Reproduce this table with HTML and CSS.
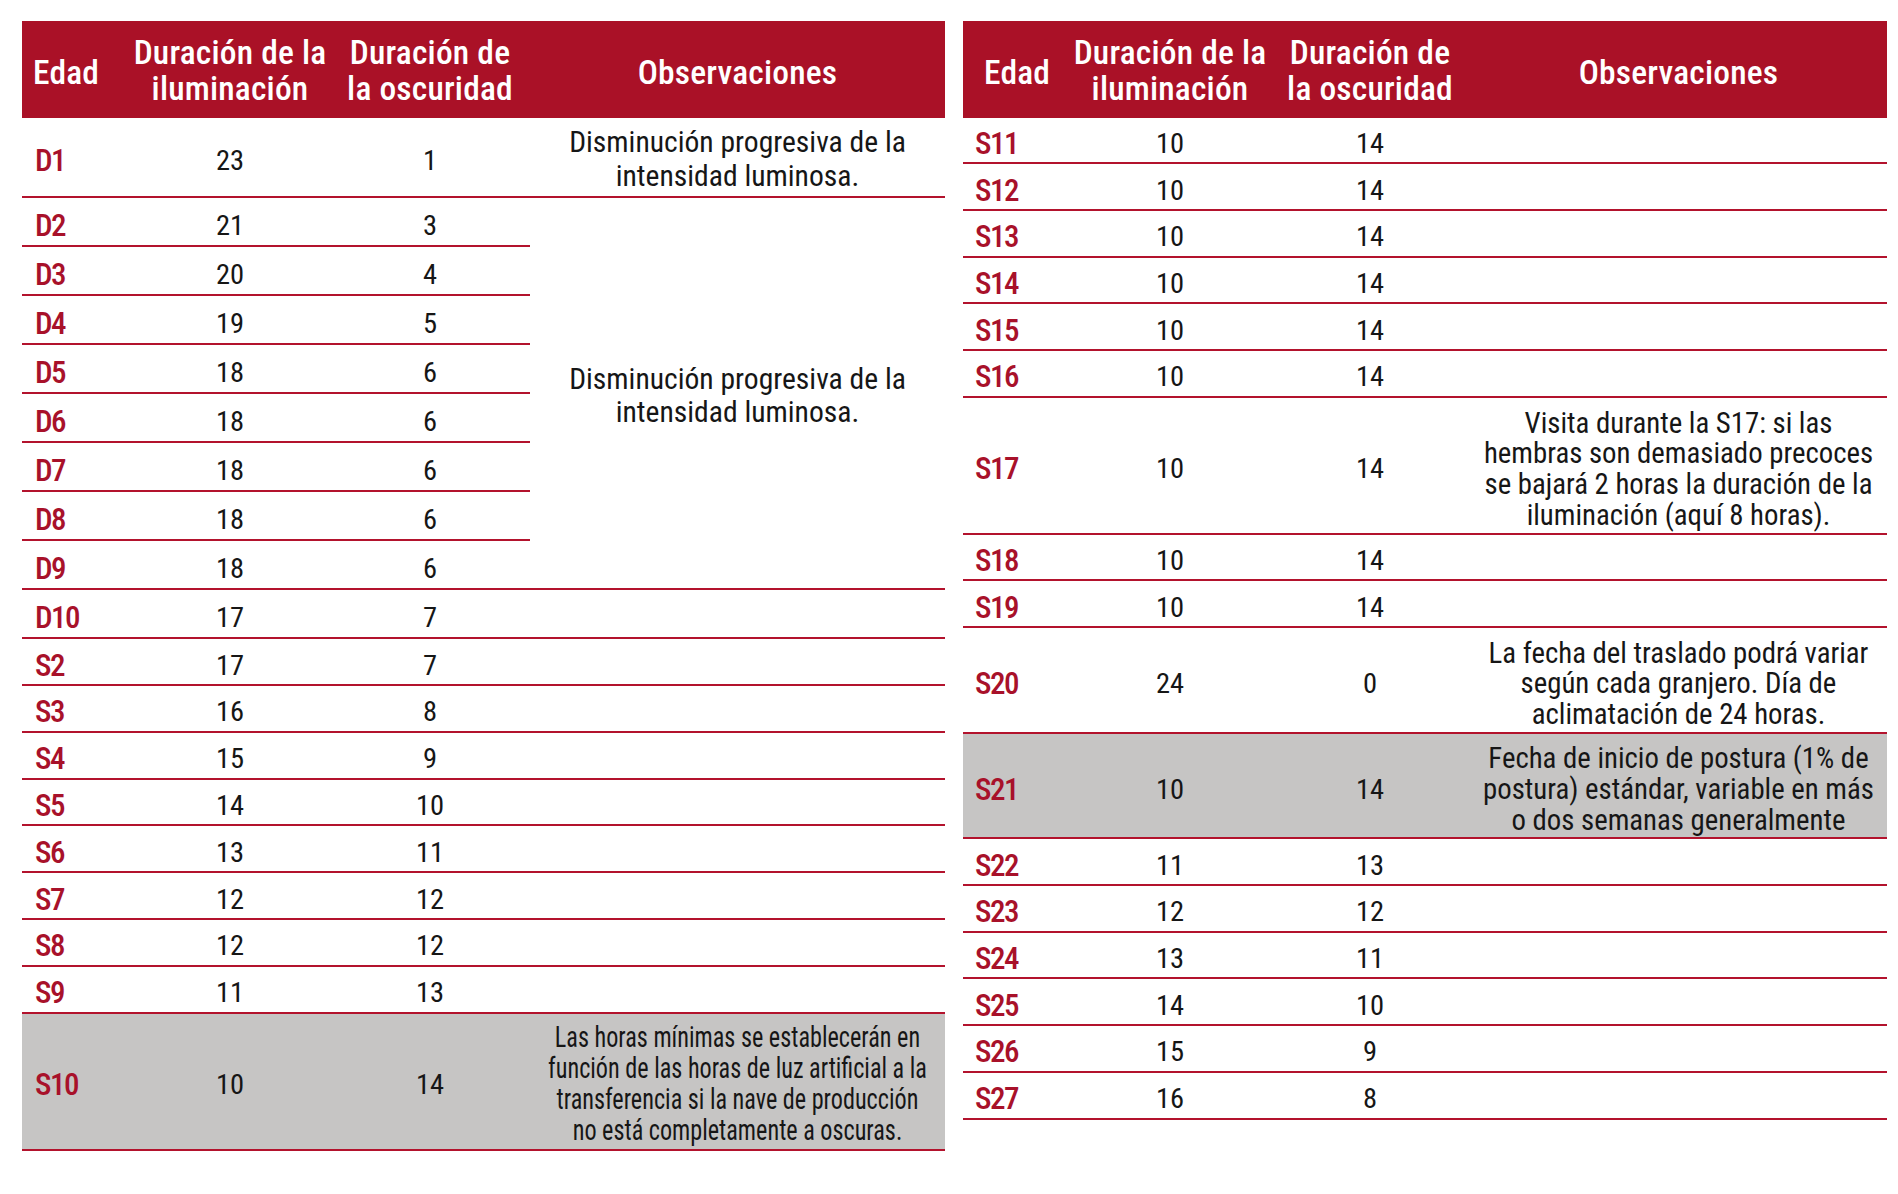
FILE: index.html
```html
<!DOCTYPE html>
<html lang="es">
<head>
<meta charset="utf-8">
<title>Programa de iluminación</title>
<link rel="stylesheet" href="styles.css">
</head>
<body>
<div class="page">
  <table class="prog left">
    <colgroup><col class="c1l"><col class="c2"><col class="c3"><col class="c4l"></colgroup>
    <thead>
      <tr class="hrow">
        <th class="h-edad h-single">Edad</th>
        <th><span class="hl">Duración de la</span><span class="hl">iluminación</span></th>
        <th><span class="hl">Duración de</span><span class="hl">la oscuridad</span></th>
        <th class="h-single">Observaciones</th>
      </tr>
    </thead>
    <tbody>
      <tr class="r-d1"><td class="lab">D1</td><td>23</td><td>1</td><td class="obs obs-d">Disminución progresiva de la<br>intensidad luminosa.</td></tr>
      <tr class="r-d"><td class="lab">D2</td><td>21</td><td>3</td><td class="obs obs-d" rowspan="8">Disminución progresiva de la<br>intensidad luminosa.</td></tr>
      <tr class="r-d"><td class="lab">D3</td><td>20</td><td>4</td></tr>
      <tr class="r-d"><td class="lab">D4</td><td>19</td><td>5</td></tr>
      <tr class="r-d"><td class="lab">D5</td><td>18</td><td>6</td></tr>
      <tr class="r-d"><td class="lab">D6</td><td>18</td><td>6</td></tr>
      <tr class="r-d"><td class="lab">D7</td><td>18</td><td>6</td></tr>
      <tr class="r-d"><td class="lab">D8</td><td>18</td><td>6</td></tr>
      <tr class="r-d"><td class="lab">D9</td><td>18</td><td>6</td></tr>
      <tr class="r-d"><td class="lab">D10</td><td>17</td><td>7</td><td></td></tr>
      <tr class="r-s"><td class="lab">S2</td><td>17</td><td>7</td><td></td></tr>
      <tr class="r-s"><td class="lab">S3</td><td>16</td><td>8</td><td></td></tr>
      <tr class="r-s"><td class="lab">S4</td><td>15</td><td>9</td><td></td></tr>
      <tr class="r-s"><td class="lab">S5</td><td>14</td><td>10</td><td></td></tr>
      <tr class="r-s"><td class="lab">S6</td><td>13</td><td>11</td><td></td></tr>
      <tr class="r-s"><td class="lab">S7</td><td>12</td><td>12</td><td></td></tr>
      <tr class="r-s"><td class="lab">S8</td><td>12</td><td>12</td><td></td></tr>
      <tr class="r-s"><td class="lab">S9</td><td>11</td><td>13</td><td></td></tr>
      <tr class="r-tall shade"><td class="lab">S10</td><td>10</td><td>14</td><td class="obs obs-sq"><div class="squeeze-wrap"><span class="squeeze">Las horas mínimas se establecerán en<br>función de las horas de luz artificial a la<br>transferencia si la nave de producción<br>no está completamente a oscuras.</span></div></td></tr>
    </tbody>
  </table>

  <table class="prog right">
    <colgroup><col class="c1r"><col class="c2"><col class="c3"><col class="c4r"></colgroup>
    <thead>
      <tr class="hrow">
        <th class="h-edad h-single">Edad</th>
        <th><span class="hl">Duración de la</span><span class="hl">iluminación</span></th>
        <th><span class="hl">Duración de</span><span class="hl">la oscuridad</span></th>
        <th class="h-single">Observaciones</th>
      </tr>
    </thead>
    <tbody>
      <tr class="r-w"><td class="lab">S11</td><td>10</td><td>14</td><td></td></tr>
      <tr class="r-w"><td class="lab">S12</td><td>10</td><td>14</td><td></td></tr>
      <tr class="r-w"><td class="lab">S13</td><td>10</td><td>14</td><td></td></tr>
      <tr class="r-w"><td class="lab">S14</td><td>10</td><td>14</td><td></td></tr>
      <tr class="r-w"><td class="lab">S15</td><td>10</td><td>14</td><td></td></tr>
      <tr class="r-w"><td class="lab">S16</td><td>10</td><td>14</td><td></td></tr>
      <tr class="r-tall"><td class="lab">S17</td><td>10</td><td>14</td><td class="obs">Visita durante la S17: si las<br>hembras son demasiado precoces<br>se bajará 2 horas la duración de la<br>iluminación (aquí 8 horas).</td></tr>
      <tr class="r-w"><td class="lab">S18</td><td>10</td><td>14</td><td></td></tr>
      <tr class="r-w"><td class="lab">S19</td><td>10</td><td>14</td><td></td></tr>
      <tr class="r-mid"><td class="lab">S20</td><td>24</td><td>0</td><td class="obs">La fecha del traslado podrá variar<br>según cada granjero. Día de<br>aclimatación de 24 horas.</td></tr>
      <tr class="r-mid shade"><td class="lab">S21</td><td>10</td><td>14</td><td class="obs">Fecha de inicio de postura (1% de<br>postura) estándar, variable en más<br>o dos semanas generalmente</td></tr>
      <tr class="r-w"><td class="lab">S22</td><td>11</td><td>13</td><td></td></tr>
      <tr class="r-w"><td class="lab">S23</td><td>12</td><td>12</td><td></td></tr>
      <tr class="r-w"><td class="lab">S24</td><td>13</td><td>11</td><td></td></tr>
      <tr class="r-w"><td class="lab">S25</td><td>14</td><td>10</td><td></td></tr>
      <tr class="r-w"><td class="lab">S26</td><td>15</td><td>9</td><td></td></tr>
      <tr class="r-w"><td class="lab">S27</td><td>16</td><td>8</td><td></td></tr>
    </tbody>
  </table>
</div>
</body>
</html>
```
FILE: styles.css
```css
html, body {
  margin: 0;
  padding: 0;
  background: #ffffff;
}

body {
  font-family: "Roboto Condensed", "Roboto", "Liberation Sans", sans-serif;
  font-stretch: 75%;
  color: #161616;
}

.page {
  display: flex;
  align-items: flex-start;
  gap: 18px;
  padding: 21px 0 0 22px;
}

.prog {
  table-layout: fixed;
  border-collapse: separate;
  border-spacing: 0;
}

.left { width: 923px; }
.right { width: 924px; }

.c1l { width: 108px; }
.c1r { width: 107px; }
.c2 { width: 200px; }
.c3 { width: 200px; }
.c4l { width: 415px; }
.c4r { width: 417px; }

.prog th {
  background: #aa1127;
  color: #ffffff;
  font-weight: 500;
  font-size: 33.5px;
  line-height: 36px;
  letter-spacing: 0.2px;
  text-align: center;
  vertical-align: middle;
  padding: 3px 0 0 0;
  white-space: nowrap;
  overflow: visible;
}

.prog th.h-single {
  padding-top: 7px;
}

.hl {
  display: block;
  height: 36px;
}

.prog th.h-edad {
  text-align: left;
  padding-left: 11px;
}

.right th.h-edad {
  padding-left: 21px;
}

.hrow { height: 96.5px; }
.r-d1 { height: 80.8px; }
.r-d { height: 49px; }
.r-s { height: 46.8px; }
.r-w { height: 46.7px; }
.r-tall { height: 137px; }
.r-mid { height: 105.7px; }

.prog td {
  padding: 7px 0 0 0;
  border-bottom: 2px solid #b3132d;
  font-size: 28.5px;
  line-height: 31px;
  text-align: center;
  vertical-align: middle;
  white-space: nowrap;
}

.prog td.lab {
  text-align: left;
  padding-left: 13px;
  color: #a8112a;
  font-size: 31px;
  font-weight: 500;
  letter-spacing: -1.5px;
}

.right td.lab {
  padding-left: 12px;
}

.prog td.obs {
  font-size: 28.8px;
  line-height: 30.7px;
  padding-top: 8px;
}

.prog td.obs-d {
  font-size: 29.6px;
  line-height: 33.5px;
  padding-top: 6px;
}

.prog td.obs-sq {
  padding-top: 5px;
}

.shade td {
  background: #c6c5c4;
}

.squeeze-wrap {
  display: flex;
  justify-content: center;
}

.squeeze {
  display: inline-block;
  line-height: 31px;
  transform: scaleX(0.84);
  transform-origin: center;
}
```
